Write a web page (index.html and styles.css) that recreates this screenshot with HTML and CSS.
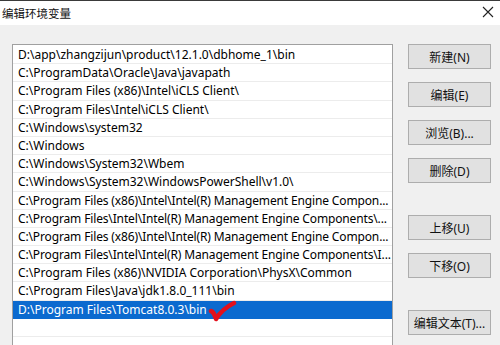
FILE: index.html
```html
<!DOCTYPE html>
<html lang="zh-CN">
<head>
  <meta charset="UTF-8">
  <title>编辑环境变量</title>
  <link rel="stylesheet" href="styles.css">
</head>
<body>
  <div class="window">
    <div class="titlebar">
      <span class="title">编辑环境变量</span>
      <svg class="close" width="12" height="12" viewBox="0 0 12 12">
        <path d="M1 1 L11 11 M11 1 L1 11" stroke="#222" stroke-width="1.1" fill="none"/>
      </svg>
    </div>

    <div class="content">
      <div class="list">
        <div class="row">D:\app\zhangzijun\product\12.1.0\dbhome_1\bin</div>
        <div class="row">C:\ProgramData\Oracle\Java\javapath</div>
        <div class="row">C:\Program Files (x86)\Intel\iCLS Client\</div>
        <div class="row">C:\Program Files\Intel\iCLS Client\</div>
        <div class="row">C:\Windows\system32</div>
        <div class="row">C:\Windows</div>
        <div class="row">C:\Windows\System32\Wbem</div>
        <div class="row">C:\Windows\System32\WindowsPowerShell\v1.0\</div>
        <div class="row long">C:\Program Files (x86)\Intel\Intel(R) Management Engine Compon...</div>
        <div class="row long">C:\Program Files\Intel\Intel(R) Management Engine Components\...</div>
        <div class="row long">C:\Program Files (x86)\Intel\Intel(R) Management Engine Compon...</div>
        <div class="row long">C:\Program Files\Intel\Intel(R) Management Engine Components\I...</div>
        <div class="row">C:\Program Files (x86)\NVIDIA Corporation\PhysX\Common</div>
        <div class="row">C:\Program Files\Java\jdk1.8.0_111\bin</div>
        <div class="row selected">
          <span>D:\Program Files\Tomcat8.0.3\bin</span>
          <svg class="check" width="30" height="26" viewBox="0 0 30 26">
            <path d="M4 12 Q7 13 9 20 Q15 10 27 4" stroke="#e3101c" stroke-width="4.5" stroke-linecap="round" stroke-linejoin="round" fill="none"/>
          </svg>
        </div>
        <div class="row"></div>
      </div>

      <div class="buttons">
        <button class="btn">新建(N)</button>
        <button class="btn">编辑(E)</button>
        <button class="btn">浏览(B)...</button>
        <button class="btn">删除(D)</button>
        <button class="btn spaced">上移(U)</button>
        <button class="btn">下移(O)</button>
        <button class="btn spaced">编辑文本(T)...</button>
      </div>
    </div>
  </div>
</body>
</html>
```

FILE: styles.css
```css
body {
  margin: 0;
  padding: 0;
  font-family: "Noto Sans", "Noto Sans CJK SC", sans-serif;
  font-size: 12px;
  color: #000;
  background-color: #f0f0f0;
}

.window {
  width: 500px;
  height: 345px;
  overflow: hidden;
  border-top: 1px solid #3a3a3a;
  box-sizing: border-box;
  background-color: #f0f0f0;
}

.titlebar {
  height: 24px;
  background-color: #fff;
  display: flex;
  align-items: center;
  justify-content: space-between;
  padding: 0 6px 0 2px;
}

.title {
  font-family: "Noto Sans CJK SC", sans-serif;
  font-size: 11.5px;
  color: #111;
}

.close {
  margin-top: -3px;
}

.content {
  display: flex;
  align-items: flex-start;
  padding: 19px 0 0 12px;
}

.list {
  width: 381px;
  height: 340px;
  box-sizing: border-box;
  border: 1px solid #a0a0a0;
  background-color: #fff;
  padding-top: 1px;
}

.row {
  height: 18.2px;
  box-sizing: border-box;
  line-height: 17px;
  padding: 0 1px 0 5px;
  border-bottom: 1px solid #ececec;
  white-space: nowrap;
  overflow: hidden;
}

/* squeeze the truncated paths a little so the "..." fits */
.row.long {
  letter-spacing: -0.14px;
}

.row.selected {
  background-color: #0b6acf;
  color: #fff;
  border-bottom-color: #0b6acf;
  position: relative;
  overflow: visible;
}

.check {
  position: absolute;
  left: 194px;
  top: -2px;
}

.buttons {
  display: flex;
  flex-direction: column;
  gap: 13px;
  margin-left: 15px;
}

.btn {
  width: 83px;
  height: 25px;
  background-color: #e1e1e1;
  border: 1px solid #adadad;
  font-family: "Noto Sans", "Noto Sans CJK SC", sans-serif;
  font-size: 12px;
  color: #111;
  padding: 0;
}

.btn.spaced {
  margin-top: 19px;
}
```
